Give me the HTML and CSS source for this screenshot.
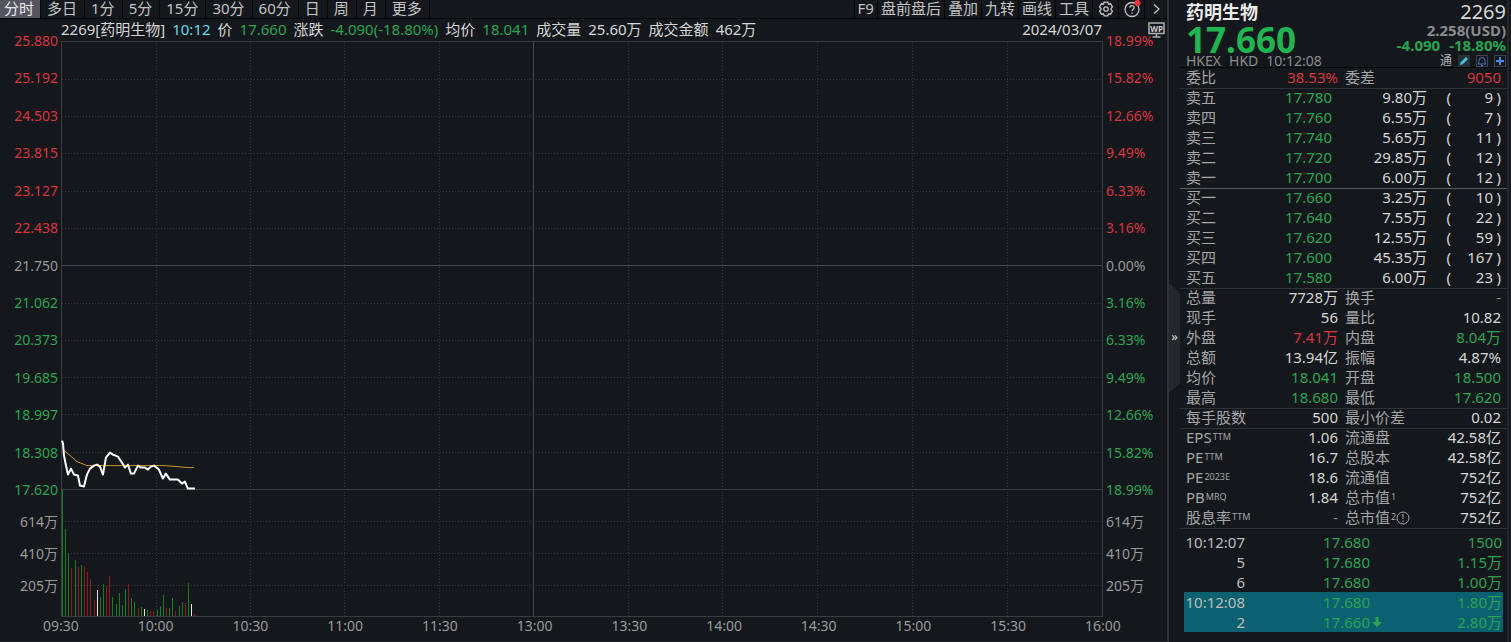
FILE: index.html
```
<!DOCTYPE html>
<html lang="zh-CN">
<head>
  <meta charset="UTF-8">
  <meta name="viewport" content="width=device-width, initial-scale=1.0">
  <title>2269 药明生物 - 分时</title>
  <link rel="stylesheet" href="styles.css">
</head>
<body>
  <div class="app">
    <main class="chart-panel">
      <nav class="toolbar">
        <div class="tabs">
          <button class="active">分时</button>
          <button>多日</button>
          <button>1分</button>
          <button>5分</button>
          <button>15分</button>
          <button>30分</button>
          <button>60分</button>
          <button>日</button>
          <button>周</button>
          <button>月</button>
          <button>更多</button>
        </div>
        <div class="tools">
          <button>F9</button>
          <button>盘前盘后</button>
          <button>叠加</button>
          <button>九转</button>
          <button>画线</button>
          <button>工具</button>
          <button class="tool-icon" aria-label="设置">
            <svg width="16" height="16" viewBox="0 0 16 16"><path d="M6.200 1.200h3.600l.7 2 2.100-.4 1.800 3.100L13 7.500v1l1.400 1.600-1.800 3.100-2.100-.4-.7 2H6.200l-.7-2-2.100.4-1.800-3.100L3 8.500v-1L1.600 5.900l1.800-3.100 2.100.4z"/><circle cx="8" cy="8" r="2.200"/></svg>
          </button>
          <button class="tool-icon" aria-label="帮助">
            <svg width="18" height="18" viewBox="0 0 18 18"><circle cx="9" cy="9.500" r="7"/><path d="M6.900 7.800c0-2.800 4.300-2.700 4.300-.2 0 1.700-2.100 1.700-2.100 3.500M9.100 12.500v1.200"/><circle class="dot" cx="14.500" cy="3" r="3"/></svg>
          </button>
          <button class="tool-icon" aria-label="展开">
            <svg width="14" height="14" viewBox="0 0 14 14"><path d="M5 2.500l5 4.500-5 4.500"/></svg>
          </button>
        </div>
      </nav>

      <div class="info">
        <span>2269[药明生物]</span>
        <span class="cyan">10:12</span>
        <span>价</span>
        <span class="down">17.660</span>
        <span>涨跌</span>
        <span class="down">-4.090(-18.80%)</span>
        <span>均价</span>
        <span class="down">18.041</span>
        <span>成交量</span>
        <span>25.60万</span>
        <span>成交金额</span>
        <span>462万</span>
        <span class="date">2024/03/07</span>
        <button class="wp" aria-label="WP">
          <svg width="17" height="16" viewBox="0 0 17 16"><rect x="1" y="1" width="15" height="10.500"/><path d="M8.500 12v2.500M4.500 15h8"/><text x="8.500" y="9.500" text-anchor="middle">WP</text></svg>
        </button>
      </div>

      <div class="chart">
        <div class="axis price left">
          <span class="up">25.880</span><span class="up">25.192</span><span class="up">24.503</span><span class="up">23.815</span><span class="up">23.127</span><span class="up">22.438</span><span>21.750</span><span class="down">21.062</span><span class="down">20.373</span><span class="down">19.685</span><span class="down">18.997</span><span class="down">18.308</span><span class="down">17.620</span>
        </div>
        <div class="axis volume left">
          <span>614万</span><span>410万</span><span>205万</span>
        </div>

        <svg class="plot" viewBox="0 0 1041 575" preserveAspectRatio="none">
          <g id="grid" class="grid"></g>
          <g id="bars" class="bars"></g>
          <polyline class="avg" points="1,408 7,413 15,420 25,424 39,424 102,424 115,425 125,426 132,426"/>
          <polyline class="line" points="0,399 1,402 2,414 4,424 6,433 9,427 12,433 16,434 18,444 22,445 25,433 28,427 32,424 35,423 38,425 41,433 44,416 48,411 51,413 56,415 60,421 63,426 66,423 69,432 72,432 76,424 79,426 83,426 86,428 89,425 92,424 97,428 101,437 104,432 108,438 116,438 120,442 123,440 126,447 133,447"/>
        </svg>

        <div class="axis price right">
          <span class="up">18.99%</span><span class="up">15.82%</span><span class="up">12.66%</span><span class="up">9.49%</span><span class="up">6.33%</span><span class="up">3.16%</span><span>0.00%</span><span class="down">3.16%</span><span class="down">6.33%</span><span class="down">9.49%</span><span class="down">12.66%</span><span class="down">15.82%</span><span class="down">18.99%</span>
        </div>
        <div class="axis volume right">
          <span>614万</span><span>410万</span><span>205万</span>
        </div>
        <div class="times">
          <span>09:30</span><span>10:00</span><span>10:30</span><span>11:00</span><span>11:30</span><span>13:00</span><span>13:30</span><span>14:00</span><span>14:30</span><span>15:00</span><span>15:30</span><span>16:00</span>
        </div>
      </div>
    </main>

    <aside class="quote">
      <button class="collapse" aria-label="收起">»</button>
      <div class="quote-body">
        <header class="head">
          <div class="head-left">
            <h1>药明生物</h1>
            <div class="last down">17.660</div>
            <div class="meta"><span>HKEX</span><span>HKD</span><span>10:12:08</span></div>
          </div>
          <div class="head-right">
            <div class="code">2269</div>
            <div class="usd">2.258(USD)</div>
            <div class="change down"><span>-4.090</span><span>-18.80%</span></div>
            <div class="actions">
              <span>通</span>
              <button aria-label="编辑"><svg width="12" height="12" viewBox="0 0 12 12"><rect class="fill-box" width="12" height="12"/><path class="pen" d="M2 10l.8-2.800L8 2l2 2-5.200 5.200z"/></svg></button>
              <button aria-label="提醒"><svg width="12" height="12" viewBox="0 0 12 12"><rect class="box" x=".5" y=".5" width="11" height="11"/><path class="bell" d="M2 9h8L9 7.500V5.500a3 3 0 0 0-6 0v2zM5 10.500h2"/></svg></button>
              <button aria-label="添加"><svg width="12" height="12" viewBox="0 0 12 12"><rect class="box" x=".5" y=".5" width="11" height="11"/><path class="plus" d="M6 2v8M2 6h8"/></svg></button>
            </div>
          </div>
        </header>

        <table class="stats">
          <tr><th>委比</th><td class="up">38.53%</td><th>委差</th><td class="up">9050</td></tr>
        </table>

        <table class="orders">
          <tr><th>卖五</th><td class="down">17.780</td><td>9.80万</td><td>(</td><td>9</td><td>)</td></tr>
          <tr><th>卖四</th><td class="down">17.760</td><td>6.55万</td><td>(</td><td>7</td><td>)</td></tr>
          <tr><th>卖三</th><td class="down">17.740</td><td>5.65万</td><td>(</td><td>11</td><td>)</td></tr>
          <tr><th>卖二</th><td class="down">17.720</td><td>29.85万</td><td>(</td><td>12</td><td>)</td></tr>
          <tr><th>卖一</th><td class="down">17.700</td><td>6.00万</td><td>(</td><td>12</td><td>)</td></tr>
        </table>
        <table class="orders buy">
          <tr><th>买一</th><td class="down">17.660</td><td>3.25万</td><td>(</td><td>10</td><td>)</td></tr>
          <tr><th>买二</th><td class="down">17.640</td><td>7.55万</td><td>(</td><td>22</td><td>)</td></tr>
          <tr><th>买三</th><td class="down">17.620</td><td>12.55万</td><td>(</td><td>59</td><td>)</td></tr>
          <tr><th>买四</th><td class="down">17.600</td><td>45.35万</td><td>(</td><td>167</td><td>)</td></tr>
          <tr><th>买五</th><td class="down">17.580</td><td>6.00万</td><td>(</td><td>23</td><td>)</td></tr>
        </table>

        <table class="stats">
          <tr><th>总量</th><td>7728万</td><th>换手</th><td class="dim">-</td></tr>
          <tr><th>现手</th><td>56</td><th>量比</th><td>10.82</td></tr>
          <tr><th>外盘</th><td class="up">7.41万</td><th>内盘</th><td class="down">8.04万</td></tr>
          <tr><th>总额</th><td>13.94亿</td><th>振幅</th><td>4.87%</td></tr>
          <tr><th>均价</th><td class="down">18.041</td><th>开盘</th><td class="down">18.500</td></tr>
          <tr><th>最高</th><td class="down">18.680</td><th>最低</th><td class="down">17.620</td></tr>
        </table>
        <table class="stats">
          <tr><th>每手股数</th><td>500</td><th>最小价差</th><td>0.02</td></tr>
        </table>
        <table class="stats">
          <tr><th>EPS<small>TTM</small></th><td>1.06</td><th>流通盘</th><td>42.58亿</td></tr>
          <tr><th>PE<small>TTM</small></th><td>16.7</td><th>总股本</th><td>42.58亿</td></tr>
          <tr><th>PE<small>2023E</small></th><td>18.6</td><th>流通值</th><td>752亿</td></tr>
          <tr><th>PB<small>MRQ</small></th><td>1.84</td><th>总市值<small>1</small></th><td>752亿</td></tr>
          <tr><th>股息率<small>TTM</small></th><td class="dim">-</td><th>总市值<small>2</small><svg class="warn" width="14" height="14" viewBox="0 0 14 14"><circle cx="7" cy="7" r="6"/><path d="M7 3v5M7 9.500v1.500"/></svg></th><td>752亿</td></tr>
        </table>

        <table class="ticks">
          <tr><td>10:12:07</td><td class="down">17.680</td><td></td><td class="down">1500</td></tr>
          <tr><td>5</td><td class="down">17.680</td><td></td><td class="down">1.15万</td></tr>
          <tr><td>6</td><td class="down">17.680</td><td></td><td class="down">1.00万</td></tr>
          <tr class="hl"><td>10:12:08</td><td class="down">17.680</td><td></td><td class="down">1.80万</td></tr>
          <tr class="hl"><td>2</td><td class="down">17.660</td><td><svg class="arrow" width="10" height="10" viewBox="0 0 10 10"><path d="M3.500 0h3v5H10L5 10 0 5h3.500z"/></svg></td><td class="down">2.80万</td></tr>
        </table>
      </div>
    </aside>
  </div>

  <script>
    const NS = 'http://www.w3.org/2000/svg';
    const W = 1041, PRICE_H = 448, H = 575;

    function addLine(x1, y1, x2, y2, cls) {
      const line = document.createElementNS(NS, 'line');
      line.setAttribute('x1', x1);
      line.setAttribute('y1', y1);
      line.setAttribute('x2', x2);
      line.setAttribute('y2', y2);
      line.setAttribute('class', cls);
      document.getElementById('grid').appendChild(line);
    }

    // grid lines
    for (let i = 1; i < 12; i++) {
      const y = PRICE_H / 12 * i;
      addLine(0, y, W, y, i === 6 ? 'mid' : 'dotted');
    }
    for (let i = 1; i < 4; i++) {
      const y = PRICE_H + 32 * i;
      addLine(0, y, W, y, 'dotted');
    }
    for (let i = 1; i < 11; i++) {
      const x = i <= 5 ? 94.4 * i : 472 + 94.8 * (i - 5);
      addLine(x, 0, x, H, i === 5 ? 'mid' : 'dotted');
    }
    addLine(0, PRICE_H, W, PRICE_H, 'solid');

    // volume per minute, 330 minutes in the session
    const volume = [127, 88, 64, 48, 56, 49, 51, 50, 44, 37, 16, 26, 19, 32, 30, 40, 19, 12, 23, 11, 27, 32,
      18, 14, 8, 9, 7, 6, 5, 5, 6, 10, 21, 8, 8, 18, 5, 10, 14, 13, 33, 12, 2];
    const side = 'gggrgrgrrrrwggrrgggggrggrgwgrrgggrggrggrgwr';
    volume.forEach((v, i) => {
      const bar = document.createElementNS(NS, 'rect');
      bar.setAttribute('x', Math.round(i * 3.15));
      bar.setAttribute('y', H - v);
      bar.setAttribute('width', 1);
      bar.setAttribute('height', v);
      bar.setAttribute('class', side[i]);
      document.getElementById('bars').appendChild(bar);
    });
  </script>
</body>
</html>
```
FILE: styles.css
```
* {
  box-sizing: border-box;
}
body {
  margin: 0;
  background-color: #14171c;
  color: #d6d6d6;
  font-family: "Noto Sans", "Noto Sans CJK SC", sans-serif;
  font-size: 15px;
  line-height: 20px;
}
button {
  background: none;
  border: none;
  padding: 0;
  margin: 0;
  color: inherit;
  font: inherit;
  cursor: pointer;
}
svg {
  display: block;
}
.up {
  color: #d9343f;
}
.down {
  color: #28a552;
}
.cyan {
  color: #62dbe6;
}

.app {
  display: flex;
  min-height: 100vh;
}

/* chart side */
.chart-panel {
  flex: 1;
  min-width: 0;
  display: flex;
  flex-direction: column;
  border-right: 2px solid #303238;
  border-bottom: 2px solid #202227;
}
.toolbar {
  display: flex;
  justify-content: space-between;
  height: 19px;
  border-bottom: 1px solid #050608;
  color: #c4c4c4;
}
.tabs,
.tools {
  display: flex;
}
.tabs button,
.tools button {
  line-height: 16px;
  padding: 0 3px 2px;
  border-right: 1px solid #050608;
  white-space: nowrap;
}
.tabs button {
  padding: 0 7px 2px 6px;
}
.tabs .active {
  padding: 0 6px 2px 4px;
  background-color: #55555f;
  color: #ececec;
}
.tools {
  border-left: 1px solid #050608;
}
.tools .tool-icon {
  display: flex;
  align-items: center;
  justify-content: center;
  width: 26px;
  padding: 0;
}
.tools .tool-icon:last-child {
  width: 22px;
  border-right: none;
}
.tool-icon svg {
  fill: none;
  stroke: #c4c4c4;
  stroke-width: 1.3;
}
.tool-icon .dot {
  fill: #f2363d;
  stroke: none;
}

.info {
  display: flex;
  gap: 7px;
  height: 22px;
  padding-left: 61px;
  padding-right: 2px;
  line-height: 20px;
  white-space: nowrap;
}
.date {
  margin-left: auto;
}
.wp {
  width: 17px;
  margin-left: 39px;
}
.wp svg {
  fill: none;
  stroke: #b0b0b0;
  stroke-width: 1.5;
}
.wp text {
  fill: #d0d0d0;
  stroke: none;
  font-size: 8px;
  font-weight: bold;
}

.chart {
  flex: 1;
  display: grid;
  grid-template-columns: 61px 1fr 64px;
  grid-template-rows: 448fr 127fr 24px;
  font-size: 14px;
  color: #9a9a9a;
}
.plot {
  grid-column: 2;
  grid-row: 1 / 3;
  width: 100%;
  height: 100%;
  min-height: 0;
  border: 1px solid #3a3c40;
  overflow: visible;
}
.axis {
  padding: 0 3px;
}
.axis.left {
  grid-column: 1;
  text-align: right;
}
.axis.right {
  grid-column: 3;
}
.axis.price {
  grid-row: 1;
  display: flex;
  flex-direction: column;
  justify-content: space-between;
  margin: -10px 0;
}
.axis.volume {
  grid-row: 2;
  display: grid;
  grid-template-rows: repeat(4, 1fr);
}
.axis.volume span {
  align-self: end;
  margin-bottom: -10px;
}
.times {
  grid-column: 2;
  grid-row: 3;
  display: flex;
  justify-content: space-between;
  margin: 0 -24px;
  line-height: 18px;
}
.times span {
  width: 48px;
  text-align: center;
}
.grid line {
  stroke: #3a3c40;
  vector-effect: non-scaling-stroke;
  shape-rendering: crispEdges;
}
.grid .dotted {
  stroke: #34363b;
  stroke-dasharray: 1 2;
}
.grid .mid {
  stroke: #46484c;
}
.bars {
  shape-rendering: crispEdges;
}
.g {
  fill: #1a7d22;
}
.r {
  fill: #8c1a1e;
}
.w {
  fill: #e6e6e6;
}
.line,
.avg {
  fill: none;
  stroke-linejoin: round;
  vector-effect: non-scaling-stroke;
}
.line {
  stroke: #fff;
  stroke-width: 2;
}
.avg {
  stroke: #c8952f;
  stroke-width: 1;
}

/* quote side */
.quote {
  display: flex;
  width: 342px;
  padding-right: 2px;
}
.collapse {
  width: 11px;
  height: 110px;
  margin-top: 283px;
  padding-bottom: 4px;
  background-color: #26272d;
  clip-path: polygon(0 0, 100% 10px, 100% 100px, 0 100%);
  font-size: 13px;
}
.quote-body {
  flex: 1;
  border-right: 2px solid #25272c;
}
.head {
  display: flex;
  justify-content: space-between;
  height: 68px;
  padding: 0 1px 0 6px;
  border-bottom: 1px solid #050608;
  white-space: nowrap;
}
h1 {
  margin: 0;
  font-size: 18px;
  line-height: 25px;
  color: #ececec;
}
.last {
  font-size: 35px;
  line-height: 29px;
  font-weight: bold;
  color: #21b552;
}
.meta {
  display: flex;
  gap: 8px;
  font-size: 14px;
  line-height: 14px;
  color: #8c8c8c;
}
.head-right {
  text-align: right;
}
.code {
  font-size: 20px;
  line-height: 24px;
}
.usd {
  line-height: 12px;
  font-weight: bold;
  color: #8c8c8c;
}
.change {
  display: flex;
  justify-content: flex-end;
  gap: 9px;
  line-height: 18px;
  font-weight: bold;
}
.actions {
  display: flex;
  justify-content: flex-end;
  align-items: center;
  gap: 6px;
  font-size: 12px;
  line-height: 14px;
  color: #b0b0b0;
}
.fill-box {
  fill: #22303a;
}
.box {
  fill: none;
  stroke: #3c4454;
}
.pen {
  fill: #4cc3d6;
}
.bell {
  fill: none;
  stroke: #3f78c4;
}
.plus {
  stroke: #4a8be0;
  stroke-width: 2;
}

table {
  width: 100%;
  table-layout: fixed;
  border-collapse: collapse;
  white-space: nowrap;
}
th,
td {
  height: 20px;
  padding: 0;
  line-height: 18px;
  font-weight: normal;
  text-align: right;
  vertical-align: top;
}
th {
  text-align: left;
  color: #a6a6a6;
}
.stats,
.orders {
  background-image: linear-gradient(#303237, #303237);
  background-size: 100% 1px;
  background-repeat: no-repeat;
}
.head + .stats {
  background-image: none;
}
.buy {
  background-image: linear-gradient(#5a5c60, #5a5c60);
}
.stats th:nth-child(1) {
  width: 80px;
  padding-left: 6px;
}
.stats td:nth-child(2) {
  width: 78px;
}
.stats th:nth-child(3) {
  width: 90px;
  padding-left: 7px;
}
.stats td:nth-child(4) {
  padding-right: 6px;
}
.orders th {
  width: 60px;
  padding-left: 6px;
}
.orders td:nth-child(2) {
  width: 92px;
}
.orders td:nth-child(3) {
  width: 95px;
}
.orders td:nth-child(4) {
  width: 24px;
}
.orders td:nth-child(6) {
  width: 14px;
  padding-right: 6px;
}
small {
  margin-left: 1px;
  font-size: 9px;
  line-height: 9px;
  vertical-align: 3px;
}
.warn {
  display: inline-block;
  vertical-align: -2px;
  fill: none;
  stroke: #a6a6a6;
}
.dim {
  color: #8c8c8c;
}

.ticks {
  padding: 4px 4px 0 4px;
  border-collapse: separate;
  border-spacing: 0;
  background-image: linear-gradient(#303237, #303237);
  background-size: 100% 1px;
  background-repeat: no-repeat;
}
.ticks td {
  line-height: 20px;
}
.ticks td:nth-child(1) {
  width: 61px;
  color: #bcbcbc;
}
.ticks td:nth-child(2) {
  width: 125px;
}
.ticks td:nth-child(3) {
  width: 20px;
  padding-left: 2px;
  vertical-align: middle;
}
.ticks td:nth-child(4) {
  padding-right: 1px;
}
.hl {
  background-color: #0b6170;
}
.arrow {
  fill: #28a552;
}
```
